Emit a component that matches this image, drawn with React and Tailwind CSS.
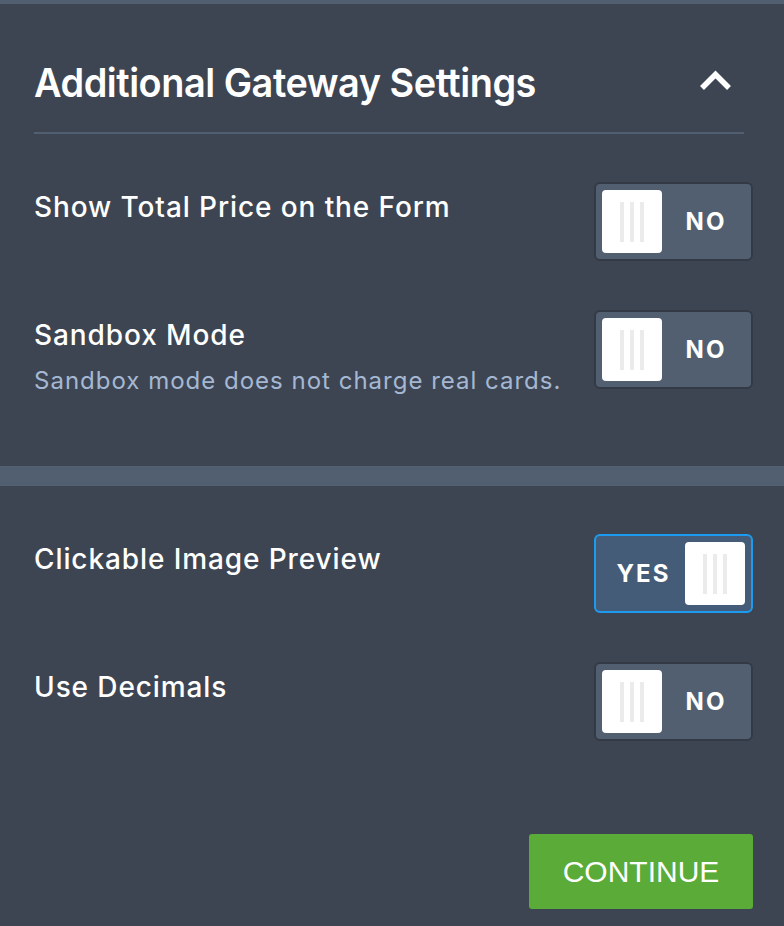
import React, { useState } from 'react';

const Toggle = ({ on, onChange }) => (
  <button
    onClick={onChange}
    className={`w-[159px] h-[79px] shrink-0 rounded-[6px] border-2 p-[6px] flex items-center ${
      on ? 'bg-[#455c79] border-[#1d9bf0] flex-row-reverse' : 'bg-[#525f71] border-[#343a45]'
    }`}
  >
    <div className="w-[60px] h-[63px] rounded-[4px] bg-white flex items-center justify-center gap-[6px]">
      <span className="w-[4px] h-[40px] bg-[#ebebeb]" />
      <span className="w-[4px] h-[40px] bg-[#ebebeb]" />
      <span className="w-[4px] h-[40px] bg-[#ebebeb]" />
    </div>
    <span className={`flex-1 text-center text-white font-bold text-[24px] tracking-[2px] ${on ? '' : 'pl-[5px]'}`}>
      {on ? 'YES' : 'NO'}
    </span>
  </button>
);

const Row = ({ label, hint, on, onChange, className = '' }) => (
  <div className={`flex items-start justify-between ${className}`}>
    <div className="pt-[7px]">
      <p className="text-white text-[28px] leading-[36px] font-medium tracking-[0.9px]">{label}</p>
      {hint && <p className="text-[#a5b8d3] text-[24px] leading-[28px] mt-[14px] tracking-[1px]">{hint}</p>}
    </div>
    <Toggle on={on} onChange={onChange} />
  </div>
);

export default function App() {
  const [open, setOpen] = useState(true);
  const [vals, setVals] = useState({ total: false, sandbox: false, preview: true, decimals: false });
  const flip = k => setVals(v => ({ ...v, [k]: !v[k] }));

  return (
    <div className="w-[784px] h-[926px] bg-[#3e4552] flex flex-col overflow-hidden font-['Inter',sans-serif]">
      <div className="h-[4px] bg-[#525f71]" />

      <div className="pl-[34px] pr-[31px] pb-[71px]">
        <div className="mt-[39px] h-[80px] flex items-center justify-between">
          <h1 className="text-white text-[40px] leading-[40px] font-semibold tracking-[-0.5px] origin-left scale-x-[0.947] whitespace-nowrap">
            Additional Gateway Settings
          </h1>
          <button onClick={() => setOpen(!open)} className="mr-[21px] mb-[4px]">
            <svg width="33" height="22" viewBox="0 0 33 22">
              <polyline points="3,18 16.5,4.5 30,18" fill="none" stroke="white" strokeWidth="5.5" strokeLinejoin="miter" />
            </svg>
          </button>
        </div>
        <div className="mt-[9px] mr-[9px] h-[2px] bg-[#525f71]" />

        <Row className="mt-[48px]" label="Show Total Price on the Form" on={vals.total} onChange={() => flip('total')} />
        <Row className="mt-[49px]" label="Sandbox Mode" hint="Sandbox mode does not charge real cards." on={vals.sandbox} onChange={() => flip('sandbox')} />
      </div>

      <div className="h-[20px] bg-[#525f71]" />

      <div className="pl-[34px] pr-[31px]">
        <Row className="mt-[48px]" label="Clickable Image Preview" on={vals.preview} onChange={() => flip('preview')} />
        <Row className="mt-[49px]" label="Use Decimals" on={vals.decimals} onChange={() => flip('decimals')} />
        <div className="flex justify-end mt-[93px]">
          <button className="w-[224px] h-[75px] rounded-[3px] bg-[#5aab38] text-white text-[30px] font-['Liberation_Sans',Arial,sans-serif]">
            CONTINUE
          </button>
        </div>
      </div>
    </div>
  );
}
